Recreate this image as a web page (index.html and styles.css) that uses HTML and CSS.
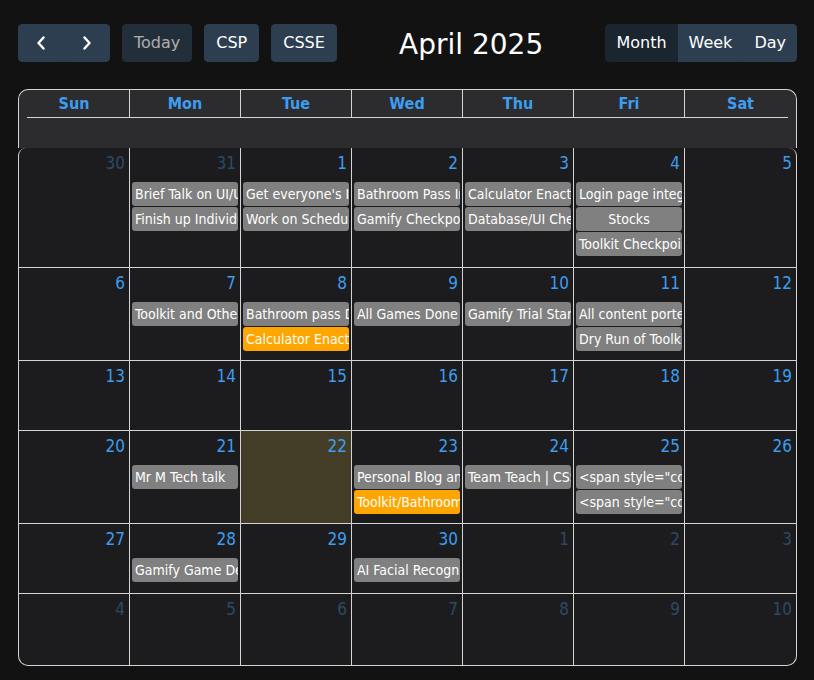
FILE: index.html
```html
<!DOCTYPE html>
<html lang="en">
<head>
    <meta charset="UTF-8">
    <meta name="viewport" content="width=device-width, initial-scale=1.0">
    <title>Calendar</title>
    <link rel="stylesheet" href="styles.css">
</head>
<body>
    <div class="page">
        <div class="toolbar">
            <div class="chunk">
                <div class="btn-group">
                    <button class="btn btn-icon" aria-label="prev">
                        <svg width="10" height="14" viewBox="0 0 10 14"><polyline points="7.5,1.5 2.5,7 7.5,12.5" fill="none" stroke="#fff" stroke-width="2.4" stroke-linecap="round" stroke-linejoin="round"/></svg>
                    </button>
                    <button class="btn btn-icon" aria-label="next">
                        <svg width="10" height="14" viewBox="0 0 10 14"><polyline points="2.5,1.5 7.5,7 2.5,12.5" fill="none" stroke="#fff" stroke-width="2.4" stroke-linecap="round" stroke-linejoin="round"/></svg>
                    </button>
                </div>
                <button class="btn btn-disabled">Today</button>
                <button class="btn">CSP</button>
                <button class="btn">CSSE</button>
            </div>
            <h2 class="title">April 2025</h2>
            <div class="btn-group views">
                <button class="btn btn-active">Month</button>
                <button class="btn">Week</button>
                <button class="btn">Day</button>
            </div>
        </div>

        <div class="calendar">
            <div class="cal-head">
                <div class="head-row">
                    <div class="head-cell">Sun</div>
                    <div class="head-cell">Mon</div>
                    <div class="head-cell">Tue</div>
                    <div class="head-cell">Wed</div>
                    <div class="head-cell">Thu</div>
                    <div class="head-cell">Fri</div>
                    <div class="head-cell">Sat</div>
                </div>
                <div class="head-rule"></div>
                <div class="head-gap"></div>
            </div>

            <div class="cal-body">
                <!-- week 1 -->
                <div class="day other"><div class="num">30</div></div>
                <div class="day other"><div class="num">31</div>
                    <div class="ev">Brief Talk on UI/UX</div>
                    <div class="ev">Finish up Individual Features</div>
                </div>
                <div class="day"><div class="num">1</div>
                    <div class="ev">Get everyone's Ideas</div>
                    <div class="ev">Work on Schedule</div>
                </div>
                <div class="day"><div class="num">2</div>
                    <div class="ev">Bathroom Pass Integration</div>
                    <div class="ev">Gamify Checkpoint</div>
                </div>
                <div class="day"><div class="num">3</div>
                    <div class="ev">Calculator Enactment</div>
                    <div class="ev">Database/UI Check</div>
                </div>
                <div class="day"><div class="num">4</div>
                    <div class="ev">Login page integration</div>
                    <div class="ev center">Stocks</div>
                    <div class="ev">Toolkit Checkpoint</div>
                </div>
                <div class="day"><div class="num">5</div></div>

                <!-- week 2 -->
                <div class="day"><div class="num">6</div></div>
                <div class="day"><div class="num">7</div>
                    <div class="ev">Toolkit and Other Work</div>
                </div>
                <div class="day"><div class="num">8</div>
                    <div class="ev">Bathroom pass Demo</div>
                    <div class="ev orange">Calculator Enactment</div>
                </div>
                <div class="day"><div class="num">9</div>
                    <div class="ev">All Games Done</div>
                </div>
                <div class="day"><div class="num">10</div>
                    <div class="ev">Gamify Trial Start</div>
                </div>
                <div class="day"><div class="num">11</div>
                    <div class="ev">All content ported</div>
                    <div class="ev">Dry Run of Toolkit</div>
                </div>
                <div class="day"><div class="num">12</div></div>

                <!-- week 3 -->
                <div class="day"><div class="num">13</div></div>
                <div class="day"><div class="num">14</div></div>
                <div class="day"><div class="num">15</div></div>
                <div class="day"><div class="num">16</div></div>
                <div class="day"><div class="num">17</div></div>
                <div class="day"><div class="num">18</div></div>
                <div class="day"><div class="num">19</div></div>

                <!-- week 4 -->
                <div class="day"><div class="num">20</div></div>
                <div class="day"><div class="num">21</div>
                    <div class="ev">Mr M Tech talk</div>
                </div>
                <div class="day today"><div class="num">22</div></div>
                <div class="day"><div class="num">23</div>
                    <div class="ev">Personal Blog and Review</div>
                    <div class="ev orange">Toolkit/Bathroom Pass</div>
                </div>
                <div class="day"><div class="num">24</div>
                    <div class="ev">Team Teach | CSS</div>
                </div>
                <div class="day"><div class="num">25</div>
                    <div class="ev">&lt;span style="color: red"&gt;</div>
                    <div class="ev">&lt;span style="color: blue"&gt;</div>
                </div>
                <div class="day"><div class="num">26</div></div>

                <!-- week 5 -->
                <div class="day"><div class="num">27</div></div>
                <div class="day"><div class="num">28</div>
                    <div class="ev">Gamify Game Demo</div>
                </div>
                <div class="day"><div class="num">29</div></div>
                <div class="day"><div class="num">30</div>
                    <div class="ev">AI Facial Recognition</div>
                </div>
                <div class="day other"><div class="num">1</div></div>
                <div class="day other"><div class="num">2</div></div>
                <div class="day other"><div class="num">3</div></div>

                <!-- week 6 -->
                <div class="day other"><div class="num">4</div></div>
                <div class="day other"><div class="num">5</div></div>
                <div class="day other"><div class="num">6</div></div>
                <div class="day other"><div class="num">7</div></div>
                <div class="day other"><div class="num">8</div></div>
                <div class="day other"><div class="num">9</div></div>
                <div class="day other"><div class="num">10</div></div>
            </div>
        </div>
    </div>
</body>
</html>
```

FILE: styles.css
```css
body {
    margin: 0;
    padding: 0;
    background-color: #121212;
    font-family: 'DejaVu Sans', sans-serif;
}

.page {
    padding: 24px 17px 0 18px;
}

/* Toolbar */
.toolbar {
    display: flex;
    justify-content: space-between;
    align-items: center;
    height: 38px;
    margin-bottom: 27px;
}

.chunk {
    display: flex;
    gap: 12px;
}

.btn-group {
    display: flex;
}

.btn {
    height: 38px;
    padding: 0 11px;
    border: 1px solid #2c3e50;
    border-radius: 4px;
    background-color: #2c3e50;
    color: #ffffff;
    font-family: 'DejaVu Sans', sans-serif;
    font-size: 16px;
    line-height: 36px;
}

.btn-icon {
    width: 46px;
    display: flex;
    align-items: center;
    justify-content: center;
}

.btn-group .btn {
    border-radius: 0;
}

.btn-group .btn:first-child {
    border-radius: 4px 0 0 4px;
}

.btn-group .btn:last-child {
    border-radius: 0 4px 4px 0;
}

.views .btn {
    padding: 0 10px;
}

.btn-disabled {
    opacity: 0.65;
}

.btn-active {
    background-color: #1a252f;
    border-color: #1a252f;
}

.title {
    margin: 0;
    padding-top: 2px;
    color: #ffffff;
    font-size: 28px;
    font-weight: normal;
}

/* Calendar grid */
.calendar {
    font-family: 'DejaVu Sans Condensed', 'DejaVu Sans', sans-serif;
    font-stretch: condensed;
}

.cal-head {
    background-color: #2c2c2e;
    border: 1px solid #d4d4d4;
    border-bottom: none;
    border-radius: 10px 10px 0 0;
}

.head-row {
    display: grid;
    grid-template-columns: repeat(7, 1fr);
}

.head-cell {
    height: 27px;
    line-height: 27px;
    text-align: center;
    color: #3d9df0;
    font-size: 16px;
    font-weight: bold;
    border-right: 1px solid #d4d4d4;
}

.head-cell:last-child {
    border-right: none;
}

.head-rule {
    height: 1px;
    margin: 0 8px;
    background-color: #d4d4d4;
}

.head-gap {
    height: 30px;
}

.cal-body {
    display: grid;
    grid-template-columns: repeat(7, 1fr);
    grid-template-rows: 120px 93px 70px 93px 70px 71px;
    background-color: #1c1c1e;
    border: 1px solid #d4d4d4;
    border-top: none;
    border-radius: 8px 8px 10px 10px;
    overflow: hidden;
}

.day {
    min-width: 0;
    border-right: 1px solid #d4d4d4;
    border-bottom: 1px solid #d4d4d4;
}

.day:nth-child(7n) {
    border-right: none;
}

.day:nth-last-child(-n+7) {
    border-bottom: none;
}

.day.today {
    background-color: #433d28;
}

.num {
    padding: 3px 4px 7px 0;
    text-align: right;
    color: #3d9df0;
    font-size: 17px;
    line-height: 24px;
}

.day.other .num {
    color: #2c4a66;
}

.ev {
    height: 24px;
    margin: 0 2px 1px 2px;
    padding: 0 3px;
    border-radius: 3px;
    background-color: #808080;
    color: #ffffff;
    font-size: 14px;
    line-height: 24px;
    white-space: nowrap;
    overflow: hidden;
}

.ev.orange {
    background-color: #ffa500;
}

.ev.center {
    text-align: center;
}
```
